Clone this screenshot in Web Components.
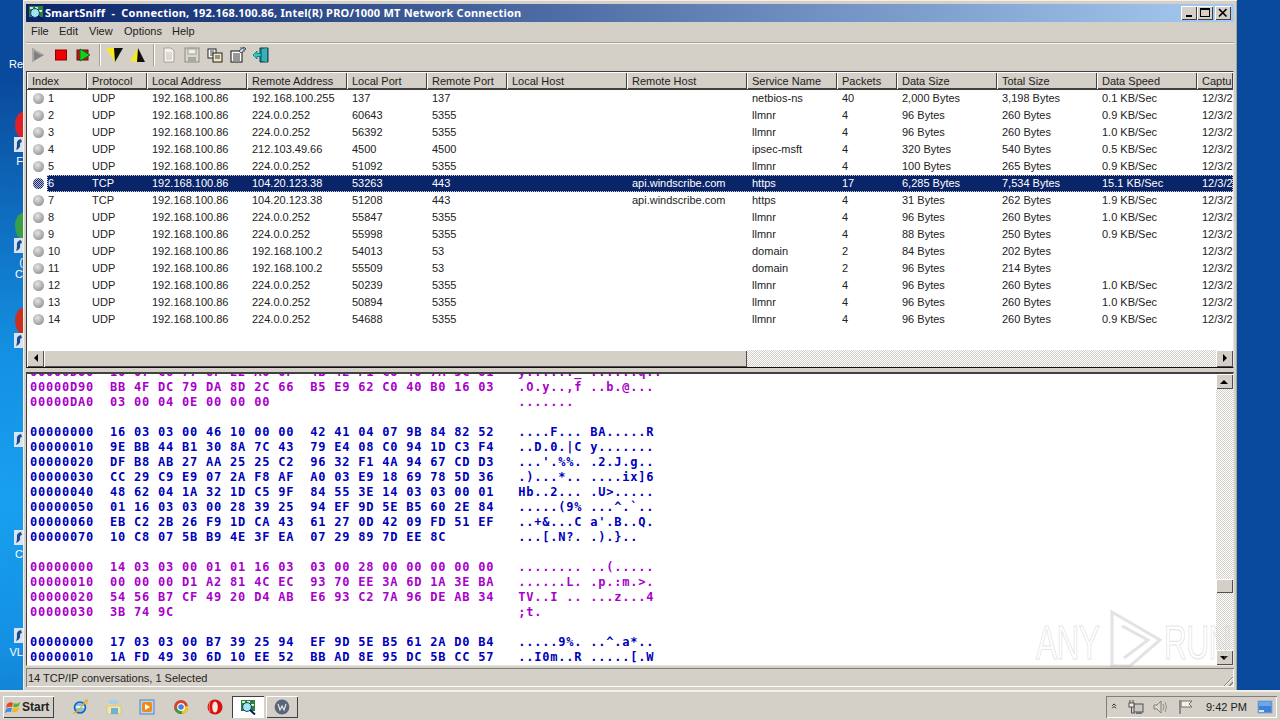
<!DOCTYPE html>
<html lang="en"><head><meta charset="utf-8"><title>SmartSniff</title>
<style>
html,body{margin:0;height:100%;overflow:hidden}
body{font:11px "Liberation Sans",sans-serif;color:#222}
</style></head>
<body>
<x-desktop>
  <x-desk-icon slot="icons" style="top:112px" blob="#e02028" label="F"></x-desk-icon>
  <x-desk-icon slot="icons" style="top:213px" blob="#3aa048" label="(<br>C"></x-desk-icon>
  <x-desk-icon slot="icons" style="top:308px" blob="#c83020" label=""></x-desk-icon>
  <x-desk-icon slot="icons" style="top:407px" blob="" label=""></x-desk-icon>
  <x-desk-icon slot="icons" style="top:505px" blob="" label="C"></x-desk-icon>
  <x-desk-icon slot="icons" style="top:603px" blob="" label="VL"></x-desk-icon>
  <span slot="icons" style="position:absolute;left:9px;top:58px;color:#fff;font-size:11px">Re</span>
  <x-window slot="window"></x-window>
  <x-taskbar slot="taskbar"></x-taskbar>
</x-desktop>
<script>
const ICONS={
play:'<path d="M2 1 L14 8 L2 15Z" fill="#808080"/><path d="M2 1 L14 8 L11 8 L4 4 L4 15 L2 15Z" fill="#a8a8a8"/>',
stop:'<rect x="2.5" y="3" width="11" height="10" fill="#f00000" stroke="#900000"/>',
rec:'<rect x="1" y="3" width="11" height="10" fill="#c01818" stroke="#601010"/><path d="M4 2 L14 8 L4 14Z" fill="#10d020" stroke="#086010" stroke-width=".8"/>',
fdown:'<path d="M0 1 L9 1 L9 15Z" fill="#f4ec20"/><path d="M8 1 L17 1 L9 15Z" fill="#101010"/>',
fup:'<path d="M9 1 L1 14 L9 15Z" fill="#f4ec20"/><path d="M9 1 L16 15 L8 15Z" fill="#101010"/>',
doc:'<path d="M3 1 H10 L13 4 V15 H3Z" fill="#f6f4ee" stroke="#a0a098"/><path d="M5 6 H11 M5 8 H11 M5 10 H11 M5 12 H11" stroke="#c0c0b8"/>',
save:'<rect x="1" y="1" width="14" height="14" fill="#d8d6ce" stroke="#8c8c84"/><rect x="4" y="2" width="8" height="5" fill="#f0f0ea" stroke="#a0a098"/><rect x="4" y="10" width="8" height="5" fill="#a8a8a0"/>',
copy:'<rect x="1" y="2" width="8" height="9" fill="#fff" stroke="#202020"/><path d="M3 4 H7 M3 6 H7 M3 8 H7" stroke="#404040"/><rect x="6" y="6" width="9" height="9" fill="#f0e8c0" stroke="#202020"/><path d="M8 9 H13 M8 11 H13" stroke="#404040"/>',
prop:'<rect x="1" y="4" width="11" height="11" fill="#fff" stroke="#101010"/><path d="M3 7 H10 M3 9 H10 M3 11 H10 M3 13 H10" stroke="#303030"/><path d="M9 4 L14 0 L16 2 L11 6Z" fill="#d8d8d8" stroke="#202020" stroke-width=".7"/><path d="M10 1 H14 V5" fill="none" stroke="#4060a0"/>',
exit:'<path d="M7 1 L15 1 L15 15 L7 15Z" fill="#208890" stroke="#103840"/><path d="M9 2 L14 1 V15 L9 14Z" fill="#38b0b8"/><path d="M0 8 L4 4 V6.5 H8 V9.5 H4 V12Z" fill="#20d0c8" stroke="#086068" stroke-width=".7"/>',
sniff:'<rect x="1" y="1" width="14" height="11" fill="#2f7f3f"/><path d="M2 2 h3v2h-3z M7 2 h3v2h-3z M11 5 h3v2h-3z M4 7h2v2h-2z" fill="#c8f0c8"/><circle cx="7" cy="8" r="4.4" fill="#9fe6ef" stroke="#1a3a70"/><path d="M10 11 L15 15.5" stroke="#0a1a60" stroke-width="2"/>',
ie:'<circle cx="8" cy="8.5" r="5.5" fill="#7cc4ee" stroke="#1a62c0" stroke-width="1.6"/><path d="M4 8 H12" stroke="#fff" stroke-width="1.6"/><path d="M1 14 C4 15 12 6 14 1 C16 0 15 4 14 5" fill="none" stroke="#e8b020" stroke-width="1.3"/>',
folder:'<path d="M1 4 H6 L7 6 H14 V15 H1Z" fill="#e8d890"/><path d="M1 7 H15 V15 H1Z" fill="#f4e8a8" stroke="#c8b870" stroke-width=".6"/><rect x="5" y="9" width="7" height="6" fill="#70b0d8"/><rect x="3" y="1" width="9" height="4" fill="#a8d0e8"/>',
wmp:'<rect x="1" y="1" width="14" height="14" fill="#b8d4f4" stroke="#4a86c8"/><rect x="3" y="3" width="10" height="10" rx="2" fill="#f08a14"/><path d="M6 5 L11 8 L6 11Z" fill="#fff"/>',
chrome:'<circle cx="8" cy="8" r="7" fill="#d84030"/><path d="M8 8 L1.5 10 A7 7 0 0 0 9 15Z" fill="#30a048"/><path d="M8 8 L15 7 A7 7 0 0 1 9 15Z" fill="#f0c820"/><circle cx="8" cy="8" r="3.4" fill="#4a80d8" stroke="#fff" stroke-width="1.2"/>',
opera:'<ellipse cx="8" cy="8" rx="7.5" ry="7.5" fill="#d81010"/><ellipse cx="8" cy="8" rx="2.8" ry="5.6" fill="#f8e8e0"/><path d="M3 3 Q1 8 3 13" stroke="#ff7060" fill="none"/>',
w:'<circle cx="8" cy="8" r="7.4" fill="#59667a"/><path d="M4 5 L6 11 L8 7 L10 11 L12 5" fill="none" stroke="#e6e6e6" stroke-width="1.2"/>',
chev:'<path d="M2 6 L5 3 L8 6 M2 10 L5 7 L8 10" fill="none" stroke="#101010" stroke-width="1.4"/>',
net:'<rect x="6" y="5" width="9" height="8" fill="#c8c8c0" stroke="#505050"/><rect x="8" y="13" width="6" height="2" fill="#707070"/><path d="M2 1 V5 M5 1 V5" stroke="#505050"/><rect x="1" y="4" width="5" height="4" fill="#f0f0e8" stroke="#505050"/><path d="M3.5 8 V14 H7" fill="none" stroke="#505050"/>',
vol:'<path d="M2 6 H5 L9 2 V14 L5 10 H2Z" fill="#d8d8d0" stroke="#808078"/><path d="M11 5 Q13 8 11 11 M13 3 Q16 8 13 13" fill="none" stroke="#909088"/>',
flag:'<path d="M3 1 V15" stroke="#606060" stroke-width="1.2"/><path d="M4 2 H15 L12 5 L15 8 H4Z" fill="#f0f0e8" stroke="#707070"/>',
mon:'<rect x="1" y="2" width="14" height="12" fill="#3d82d8" stroke="#90a8c0"/><path d="M2 3 H14 V7 H2Z" fill="#6aa8ee"/><rect x="2" y="11" width="5" height="2" fill="#d4e4f4"/>',
start:'<path d="M2 5 Q5 2 8 4 L7 8 Q4 7 1 9Z" fill="#e8481c"/><path d="M9 4 Q12 6 15 3 L14 7 Q11 9 8 8Z" fill="#60b030"/><path d="M1 10 Q4 8 7 9 L6 13 Q3 12 0 14Z" fill="#3890e0"/><path d="M8 9 Q11 10 14 8 L13 12 Q10 14 7 13Z" fill="#f0b820"/>'
};
function svg(name,w=16,h=16,vb='0 0 16 16'){return `<svg width="${w}" height="${h}" viewBox="${vb}" style="display:block">${ICONS[name]}</svg>`}
function def(tag,css,html,init){
  customElements.define(tag,class extends HTMLElement{
    constructor(){super();const r=this.attachShadow({mode:'open'});
      r.innerHTML=`<style>${css}</style>`+(typeof html==='function'?html(this):html);}
    connectedCallback(){if(init&&!this._i){this._i=1;init.call(this,this.shadowRoot)}}
  });
}

def('x-desktop',`
:host{display:grid;grid-template-rows:690px 30px;width:1280px;height:720px;overflow:hidden}
.bg{position:relative;background:radial-gradient(520px 420px at 0 500px,#18a0ee 0,#1490e2 35%,rgba(20,120,210,0) 100%),#0a4a9c;overflow:hidden}
`,`<div class="bg"><slot name="icons"></slot><slot name="window"></slot></div><slot name="taskbar"></slot>`);

def('x-desk-icon',`
:host{position:absolute;left:0;width:23px;height:74px;display:block;color:#fff}
.blob{position:absolute;left:15px;top:0;width:16px;height:26px;border-radius:50%}
.sc{position:absolute;left:14px;top:25px;width:9px;height:15px;background:#d8e4f4}
.sc svg{display:block}
.t{position:absolute;left:0;right:0;top:43px;text-align:right;font:11px/12px "Liberation Sans",sans-serif;white-space:nowrap;overflow:visible}
`,h=>`${h.getAttribute('blob')?`<div class="blob" style="background:${h.getAttribute('blob')}"></div>`:''}
<div class="sc"><svg width="9" height="15" viewBox="0 0 9 15"><path d="M7 2 Q2 3 3 8 Q3 11 2 13 Q7 11 6 7 Q6 5 8 5Z" fill="#1a4a8a"/></svg></div>
<div class="t">${h.getAttribute('label')||''}</div>`);

def('x-window',`
:host{position:absolute;left:23px;top:0;width:1214px;height:690px;box-sizing:border-box;padding:4px 3px 2px;background:#d4d0c8;display:flex;flex-direction:column;box-shadow:inset 1px 1px #f4f0e8,inset -1px 0 #a8a49c}
.wm{position:absolute;left:1013px;top:608px;width:200px;height:62px;pointer-events:none}
`,`<x-titlebar></x-titlebar><x-menubar></x-menubar><x-toolbar></x-toolbar><x-conn-table></x-conn-table><x-splitter></x-splitter><x-hexview></x-hexview><x-statusbar></x-statusbar><x-watermark class="wm"></x-watermark>`);

def('x-titlebar',`
:host{display:flex;align-items:center;height:18px;background:linear-gradient(90deg,#0a246a,#a6caf0);color:#fff;font:bold 11px "Noto Sans",sans-serif;flex:none;padding:0 3px 0 2px;gap:1px}
.t{flex:1;white-space:pre;letter-spacing:.22px;margin-top:-2px}
.b{width:16px;height:14px;background:#d4d0c8;box-shadow:inset 1px 1px #fff,inset -1px -1px #404040;display:flex;align-items:center;justify-content:center}
.bs{display:flex}
.bs .b:last-child{margin-left:2px}
`,`${svg('sniff')}<span class="t">SmartSniff  -  Connection, 192.168.100.86, Intel(R) PRO/1000 MT Network Connection</span>
<div class="bs"><div class="b"><svg width="10" height="10"><rect x="2" y="7" width="6" height="2" fill="#000"/></svg></div><div class="b"><svg width="10" height="10"><rect x=".5" y=".5" width="9" height="8" fill="none" stroke="#000"/><rect x="0" y="0" width="10" height="2"/></svg></div><div class="b"><svg width="10" height="10"><path d="M1 1 L8.5 8.5 M8.5 1 L1 8.5" stroke="#000" stroke-width="1.7"/></svg></div></div>`);

def('x-menubar',`
:host{display:flex;height:20px;align-items:center;flex:none;padding:0 0 2px 5px;box-sizing:border-box;color:#222;font-size:11px}
`,`<span style="width:28px">File</span><span style="width:30px">Edit</span><span style="width:35px">View</span><span style="width:48px">Options</span><span>Help</span>`);

def('x-toolbar',`
:host{display:flex;height:28px;flex:none;align-items:center;border-top:1px solid #f6f4ee;box-shadow:0 -1px #a8a49c;margin-top:1px;box-sizing:border-box;padding-bottom:5px}
.b{width:23px;display:flex;justify-content:center}
.s{width:8px;display:flex;justify-content:center}
.s i{display:block;width:1px;height:22px;background:#a0a098;box-shadow:1px 0 #fff}
`,`<div class="b">${svg('play')}</div><div class="b">${svg('stop')}</div><div class="b">${svg('rec')}</div><div class="s"><i></i></div>
<div class="b"><svg width="18" height="16" viewBox="0 0 18 16" style="display:block">${ICONS.fdown}</svg></div><div class="b"><svg width="17" height="16" viewBox="0 0 17 16" style="display:block">${ICONS.fup}</svg></div><div class="s"><i></i></div>
<div class="b">${svg('doc')}</div><div class="b">${svg('save')}</div><div class="b">${svg('copy')}</div><div class="b">${svg('prop')}</div><div class="b">${svg('exit')}</div>`);

const COLS=[['Index',60],['Protocol',60],['Local Address',100],['Remote Address',100],['Local Port',80],['Remote Port',80],['Local Host',120],['Remote Host',120],['Service Name',90],['Packets',60],['Data Size',100],['Total Size',100],['Data Speed',100],['Captu',36]];
const L='192.168.100.86',M='224.0.0.252',A='104.20.123.38',G='192.168.100.2',H='api.windscribe.com';
const ROWS=[
['1','UDP',L,'192.168.100.255','137','137','','','netbios-ns','40','2,000 Bytes','3,198 Bytes','0.1 KB/Sec'],
['2','UDP',L,M,'60643','5355','','','llmnr','4','96 Bytes','260 Bytes','0.9 KB/Sec'],
['3','UDP',L,M,'56392','5355','','','llmnr','4','96 Bytes','260 Bytes','1.0 KB/Sec'],
['4','UDP',L,'212.103.49.66','4500','4500','','','ipsec-msft','4','320 Bytes','540 Bytes','0.5 KB/Sec'],
['5','UDP',L,M,'51092','5355','','','llmnr','4','100 Bytes','265 Bytes','0.9 KB/Sec'],
['6','TCP',L,A,'53263','443','',H,'https','17','6,285 Bytes','7,534 Bytes','15.1 KB/Sec'],
['7','TCP',L,A,'51208','443','',H,'https','4','31 Bytes','262 Bytes','1.9 KB/Sec'],
['8','UDP',L,M,'55847','5355','','','llmnr','4','96 Bytes','260 Bytes','1.0 KB/Sec'],
['9','UDP',L,M,'55998','5355','','','llmnr','4','88 Bytes','250 Bytes','0.9 KB/Sec'],
['10','UDP',L,G,'54013','53','','','domain','2','84 Bytes','202 Bytes',''],
['11','UDP',L,G,'55509','53','','','domain','2','96 Bytes','214 Bytes',''],
['12','UDP',L,M,'50239','5355','','','llmnr','4','96 Bytes','260 Bytes','1.0 KB/Sec'],
['13','UDP',L,M,'50894','5355','','','llmnr','4','96 Bytes','260 Bytes','1.0 KB/Sec'],
['14','UDP',L,M,'54688','5355','','','llmnr','4','96 Bytes','260 Bytes','0.9 KB/Sec']];
const dith='repeating-conic-gradient(#fff 0 25%,#d4d0c8 0 50%) 0 0/2px 2px';
def('x-conn-table',`
:host{display:flex;flex-direction:column;flex:none;height:297px;border:1px solid #404040;border-right-color:#e8e6e0;border-bottom-color:#101010;box-sizing:border-box;background:#fff;overflow:hidden;font-size:11px}
.hd{display:flex;height:18px;flex:none;background:#d4d0c8;border-bottom:1px solid #404040;box-sizing:border-box}
.hd div{flex:none;box-sizing:border-box;padding-left:5px;line-height:18px;white-space:nowrap;overflow:hidden;box-shadow:inset 1px 1px #fff,inset -1px -1px #404040}
.body{flex:1;min-height:0;overflow:hidden}
.r{display:flex;height:17px;line-height:16px;white-space:nowrap;position:relative}
.c{flex:none;box-sizing:border-box;padding-left:5px;overflow:hidden}
.c0{display:flex;padding-left:6px;gap:4px;align-items:center}
.dot{width:11px;height:11px;border-radius:50%;flex:none;background:radial-gradient(circle at 40% 35%,#e4e4e4,#a8a8a8 60%,#808080)}
.idx{flex:1;height:17px;line-height:16px;margin-left:-1px;padding-left:1px}
.sel .c{background:#0a246a;color:#fff}
.sel .c0{background:transparent;color:#222}
.sel .idx{background:#0a246a;color:#fff}
.sel .dot{background:repeating-conic-gradient(#1a3070 0 25%,#b8b8c8 0 50%) 0 0/2px 2px}
.sel::after{content:"";position:absolute;left:20px;right:0;top:0;bottom:0;border:1px dotted #d4d0c8}
.sb{display:flex;height:17px;flex:none;background:${dith}}
.btn{width:17px;height:17px;flex:none;background:#d4d0c8;box-shadow:inset 1px 1px #fff,inset -1px -1px #505050;display:flex;align-items:center;justify-content:center}
.th{width:703px;background:#d4d0c8;box-shadow:inset 1px 1px #fff,inset -1px -1px #505050;flex:none}
.sp{flex:1}
`,`<div class="hd" id="h"></div><div class="body" id="b"></div><div class="sb"><div class="btn"><svg width="6" height="9"><path d="M5 0 V8 L1 4Z" fill="#000"/></svg></div><div class="th"></div><div class="sp"></div><div class="btn"><svg width="6" height="9"><path d="M1 0 V8 L5 4Z" fill="#000"/></svg></div></div>`,
function(r){
  const h=r.getElementById('h'),b=r.getElementById('b');
  COLS.forEach(([n,w])=>{const d=document.createElement('div');d.style.width=w+'px';d.textContent=n;h.append(d)});
  ROWS.forEach((row,i)=>{
    const e=document.createElement('div');e.className='r'+(i==5?' sel':'');
    COLS.forEach(([n,w],j)=>{
      const c=document.createElement('div');c.className='c'+(j==0?' c0':'');c.style.width=w+'px';
      if(j==0){const d=document.createElement('span');d.className='dot';const s=document.createElement('span');s.className='idx';s.textContent=row[0];c.append(d,s)}
      else c.textContent=j==13?'12/3/2':row[j];
      e.append(c)});
    b.append(e)});
});

def('x-splitter',`:host{display:block;height:4px;flex:none;background:#d4d0c8}`,``);

const P='#a800cc',B='#0000bb';
const HEX=[
[P,'00000D80','10 07 C6 77 6F E2 A0 0F 4B 42 F1 C8 40 7A 5C 81','y......_ ......q..'],
[P,'00000D90','BB 4F DC 79 DA 8D 2C 66 B5 E9 62 C0 40 B0 16 03','.O.y..,f ..b.@...'],
[P,'00000DA0','03 00 04 0E 00 00 00','.......'],[],
[B,'00000000','16 03 03 00 46 10 00 00 42 41 04 07 9B 84 82 52','....F... BA.....R'],
[B,'00000010','9E BB 44 B1 30 8A 7C 43 79 E4 08 C0 94 1D C3 F4','..D.0.|C y.......'],
[B,'00000020','DF B8 AB 27 AA 25 25 C2 96 32 F1 4A 94 67 CD D3',"...'.%%. .2.J.g.."],
[B,'00000030','CC 29 C9 E9 07 2A F8 AF A0 03 E9 18 69 78 5D 36','.)...*.. ....ix]6'],
[B,'00000040','48 62 04 1A 32 1D C5 9F 84 55 3E 14 03 03 00 01','Hb..2... .U>.....'],
[B,'00000050','01 16 03 03 00 28 39 25 94 EF 9D 5E B5 60 2E 84','.....(9% ...^.`..'],
[B,'00000060','EB C2 2B 26 F9 1D CA 43 61 27 0D 42 09 FD 51 EF',"..+&...C a'.B..Q."],
[B,'00000070','10 C8 07 5B B9 4E 3F EA 07 29 89 7D EE 8C','...[.N?. .).}..'],[],
[P,'00000000','14 03 03 00 01 01 16 03 03 00 28 00 00 00 00 00','........ ..(.....'],
[P,'00000010','00 00 00 D1 A2 81 4C EC 93 70 EE 3A 6D 1A 3E BA','......L. .p.:m.>.'],
[P,'00000020','54 56 B7 CF 49 20 D4 AB E6 93 C2 7A 96 DE AB 34','TV..I .. ...z...4'],
[P,'00000030','3B 74 9C',';t.'],[],
[B,'00000000','17 03 03 00 B7 39 25 94 EF 9D 5E B5 61 2A D0 B4','.....9%. ..^.a*..'],
[B,'00000010','1A FD 49 30 6D 10 EE 52 BB AD 8E 95 DC 5B CC 57','..I0m..R .....[.W']];
def('x-hexview',`
:host{display:flex;flex:none;height:294px;box-sizing:border-box;border:1px solid #404040;border-right-color:#e8e6e0;border-bottom-color:#e8e6e0;border-top:2px solid #404040;background:#fff;overflow:hidden}
.txt{flex:1;min-width:0;overflow:hidden;padding-left:3px}
pre{margin:-9px 0 0;font:bold 12px/15px "DejaVu Sans Mono","Liberation Mono",monospace;letter-spacing:.78px;min-height:15px}
.sb{width:17px;flex:none;display:flex;flex-direction:column;background:${dith}}
.btn{height:15px;flex:none;background:#d4d0c8;box-shadow:inset 1px 1px #fff,inset -1px -1px #505050;display:flex;align-items:center;justify-content:center}
.th{height:14px;flex:none;margin-top:190px;background:#d4d0c8;box-shadow:inset 1px 1px #fff,inset -1px -1px #505050}
.sp{flex:1}
`,`<div class="txt" id="t"></div><div class="sb"><div class="btn"><svg width="9" height="6"><path d="M0 5 H8 L4 1Z" fill="#000"/></svg></div><div class="th"></div><div class="sp"></div><div class="btn"><svg width="9" height="6"><path d="M0 1 H8 L4 5Z" fill="#000"/></svg></div></div>`,
function(r){
  const t=r.getElementById('t');
  HEX.forEach((l,i)=>{
    const p=document.createElement('pre');if(i)p.style.marginTop='0';
    if(l.length){const by=l[2].split(' ');let s=l[1]+'  ';
      for(let k=0;k<16;k++){s+=(by[k]||'  ')+' ';if(k==7)s+=' '}
      s+='  '+l[3];p.style.color=l[0];p.textContent=s}
    else p.textContent=' ';
    t.append(p)});
});

def('x-statusbar',`
:host{display:flex;align-items:center;flex:none;height:19px;margin-top:2px;box-sizing:border-box;padding:1px 0 0 2px;font-size:11px;color:#222;box-shadow:inset 1px 1px #808078,inset -1px -1px #fff;position:relative}
.g{position:absolute;right:1px;bottom:1px;width:12px;height:12px;background:repeating-linear-gradient(135deg,transparent 0 2px,#808078 2px 3px,#fff 3px 4px);clip-path:polygon(100% 0,100% 100%,0 100%)}
`,`<span>14 TCP/IP conversations, 1 Selected</span><div class="g"></div>`);

def('x-watermark',`
:host{display:block}
.w{position:relative;width:200px;height:62px;display:flex;align-items:center;font:48px "Liberation Sans",sans-serif;color:rgba(255,255,255,.15);-webkit-text-stroke:1.2px rgba(170,170,170,.33);line-height:1}
span{display:block;width:68px;transform:scaleX(.66);transform-origin:left center;letter-spacing:-1px;margin-top:8px}
svg{flex:none;width:62px;height:62px}
.r{width:66px;margin-left:-2px}
`,`<div class="w"><span>ANY</span><svg viewBox="0 0 62 62"><path d="M8 4 L56 32 L26 58 L8 58Z M8 4 V58 M18 18 L44 32 L20 50" fill="none" stroke="rgba(170,170,170,.33)" stroke-width="3"/></svg><span class="r">RUN</span></div>`);

def('x-taskbar',`
:host{display:flex;align-items:center;height:30px;background:#d4d0c8;box-shadow:inset 0 2px #f2f0ea;padding:3px 3px 0;box-sizing:border-box;font:11px "Liberation Sans",sans-serif;color:#222}
.st{display:flex;align-items:center;gap:1px;width:51px;height:22px;box-sizing:border-box;padding-left:2px;font:bold 12px "Liberation Sans",sans-serif;box-shadow:inset 1px 1px #fff,inset -1px -1px #404040;flex:none}
.q{display:flex;margin-left:9px;flex:none}
.q div{width:33.7px;display:flex;justify-content:center}
.tb{width:32px;height:22px;flex:none;display:flex;align-items:center;justify-content:center;box-sizing:border-box;margin-right:2px}
.a{background:#fff;box-shadow:inset 1px 1px #404040,inset -1px -1px #fff;margin-left:1px}
.i{box-shadow:inset 1px 1px #fff,inset -1px -1px #404040}
.sp{flex:1}
.tray{display:flex;align-items:center;width:171px;height:22px;box-sizing:border-box;box-shadow:inset 1px 1px #808078,inset -1px -1px #fff;padding-left:5px;flex:none}
.tray>*{flex:none}
.tm{margin-left:13px;width:51px;font-size:11px}
`,`<div class="st">${svg('start')}<span>Start</span></div><div class="q"><div>${svg('ie')}</div><div>${svg('folder')}</div><div>${svg('wmp')}</div><div>${svg('chrome')}</div><div>${svg('opera')}</div></div>
<div class="tb a">${svg('sniff')}</div><div class="tb i">${svg('w')}</div><div class="sp"></div>
<div class="tray"><div style="width:10px">${svg('chev',10,16)}</div><div style="margin-left:7px">${svg('net')}</div><div style="margin-left:8px">${svg('vol')}</div><div style="margin-left:9px">${svg('flag')}</div><span class="tm">9:42 PM</span><div>${svg('mon')}</div></div>`);
</script>
</body></html>
